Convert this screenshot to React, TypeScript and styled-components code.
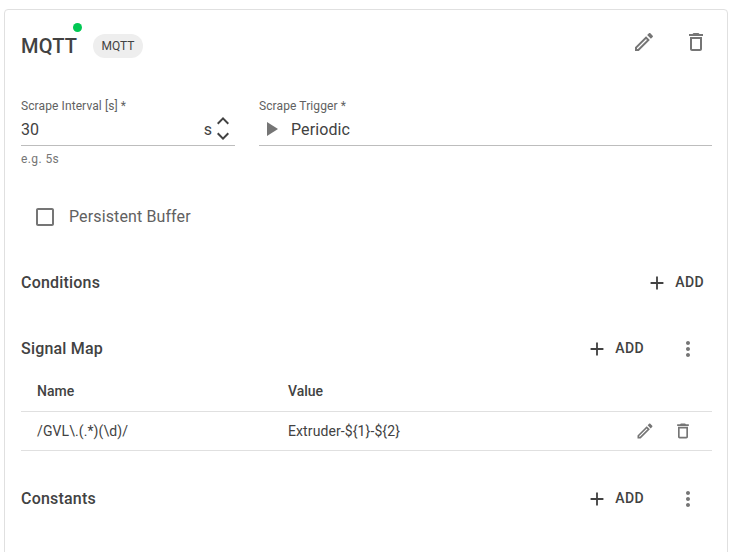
import React from 'react';
import styled, { createGlobalStyle } from 'styled-components';

const Global = createGlobalStyle`
  html, body { margin: 0; padding: 0; background: #fff; overflow: hidden; }
  body { font-family: Roboto, "Liberation Sans", sans-serif; color: #424242; }
`;

const Page = styled.div`
  width: 736px;
  height: 552px;
  overflow: hidden;
  padding: 9px 8px 0 4px;
  box-sizing: border-box;
`;
const Card = styled.section`
  border: 1px solid #e0e0e0;
  border-radius: 4px;
  padding: 0 15px 40px 16px;
  height: 600px;
  box-sizing: border-box;
`;
const Head = styled.header`
  height: 71px;
  display: flex;
  align-items: center;
`;
const TitleWrap = styled.div`
  position: relative;
  margin-right: 16px;
`;
const Title = styled.h1`
  margin: 0;
  font-size: 20px;
  line-height: 24px;
  font-weight: 500;
  color: #424242;
  letter-spacing: 0.15px;
`;
const Dot = styled.span`
  position: absolute;
  right: -5px;
  top: -11px;
  width: 9px;
  height: 9px;
  border-radius: 50%;
  background: #00c853;
`;
const Chip = styled.span`
  height: 24px;
  width: 50px;
  border-radius: 12px;
  background: #eeeeee;
  font-size: 12px;
  line-height: 24px;
  text-align: center;
  color: #424242;
`;
const Spacer = styled.div`
  flex: 1;
`;
const HeadActions = styled.div`
  align-self: flex-start;
  display: flex;
  margin-right: 4px;
  margin-top: 20px;
  gap: 28px;
`;
const Svg = styled.svg<{ $c?: string }>`
  display: block;
  flex: none;
  fill: ${p => p.$c || '#757575'};
`;
const Fields = styled.div`
  display: grid;
  grid-template-columns: 214px 1fr;
  column-gap: 24px;
  padding-top: 18px;
`;
const Field = styled.div`
  display: flex;
  flex-direction: column;
`;
const Label = styled.label`
  font-size: 12px;
  line-height: 14px;
  height: 14px;
  color: #616161;
  letter-spacing: 0.1px;
`;
const Control = styled.div`
  height: 33px;
  display: flex;
  align-items: center;
  border-bottom: 1px solid #bdbdbd;
  font-size: 16px;
  box-sizing: border-box;
  color: #424242;
  letter-spacing: 0.1px;
`;
const Unit = styled.span`
  margin-left: auto;
  margin-right: -1px;
  font-size: 16px;
  padding-top: 1px;
`;
const Stepper = styled.span`
  display: flex;
  flex-direction: column;
  margin-top: -1px;
  svg + svg {
    margin-top: -9px;
  }
`;
const Helper = styled.div`
  font-size: 12px;
  line-height: 14px;
  color: #757575;
  margin-top: 6px;
  letter-spacing: 0.4px;
`;
const TriggerIcon = styled.span`
  display: inline-flex;
  margin-right: 8px;
`;
const CheckRow = styled.div`
  display: flex;
  align-items: center;
  gap: 12px;
  margin-top: 39px;
  margin-left: 12px;
  height: 24px;
`;
const CheckLabel = styled.span`
  font-size: 16px;
  line-height: 24px;
  height: 24px;
  color: #616161;
  letter-spacing: 0.12px;
`;
const SectionHead = styled.div<{ $top: number }>`
  display: flex;
  align-items: center;
  height: 40px;
  margin-top: ${p => p.$top}px;
`;
const SectionTitle = styled.h2`
  margin: 0;
  font-size: 16px;
  font-weight: 500;
  color: #424242;
  flex: 1;
  letter-spacing: 0.2px;
`;
const AddButton = styled.button<{ $end?: boolean }>`
  display: inline-flex;
  align-items: center;
  border: 0;
  background: none;
  padding: 0;
  margin-right: ${p => (p.$end ? 8 : 0)}px;
  font: 500 14px Roboto, sans-serif;
  color: #424242;
  letter-spacing: 0.4px;
  gap: 7px;
  svg {
    margin-top: 2px;
  }
`;
const MoreSlot = styled.span`
  display: inline-flex;
  justify-content: center;
  width: 24px;
  margin-left: 32px;
  margin-right: 12px;
  margin-top: 2px;
`;
const Table = styled.div`
  display: grid;
  grid-template-columns: 251px 1fr 80px;
  margin-top: 3px;
`;
const HeadCell = styled.div`
  height: 41px;
  padding-left: 16px;
  display: flex;
  align-items: center;
  font-size: 14px;
  font-weight: 500;
  color: #424242;
  border-bottom: 1px solid #e0e0e0;
  box-sizing: border-box;
  padding-bottom: 1px;
`;
const Cell = styled.div`
  height: 39px;
  padding-left: 16px;
  display: flex;
  align-items: center;
  font-size: 14px;
  color: #424242;
  border-bottom: 1px solid #e0e0e0;
  box-sizing: border-box;
  letter-spacing: 0.1px;
`;
const ActionCell = styled(Cell)`
  padding-left: 0;
  gap: 18px;
  justify-content: flex-end;
  padding-right: 19px;
`;

const Icon = ({ d, size = 24, c }: { d: string; size?: number; c?: string }) => (
  <Svg $c={c} width={size} height={size} viewBox="0 0 24 24"><path d={d} /></Svg>
);

const EDIT = 'M3 17.25V21h3.75L17.81 9.94l-3.75-3.75L3 17.25zM5.92 19H5v-.92l9.06-9.06.92.92L5.92 19zM20.71 5.63l-2.34-2.34c-.2-.2-.45-.29-.71-.29s-.51.1-.7.29l-1.83 1.83 3.75 3.75 1.83-1.83c.39-.39.39-1.02 0-1.41z';
const TRASH = 'M6 19c0 1.1.9 2 2 2h8c1.1 0 2-.9 2-2V7H6v12zM8 9h8v10H8V9zm7.5-5l-1-1h-5l-1 1H5v2h14V4z';
const PLUS = 'M19 13h-6v6h-2v-6H5v-2h6V5h2v6h6v2z';
const MORE = 'M12 8c1.1 0 2-.9 2-2s-.9-2-2-2-2 .9-2 2 .9 2 2 2zm0 2c-1.1 0-2 .9-2 2s.9 2 2 2 2-.9 2-2-.9-2-2-2zm0 6c-1.1 0-2 .9-2 2s.9 2 2 2 2-.9 2-2-.9-2-2-2z';
const BOX = 'M19 5v14H5V5h14m0-2H5c-1.1 0-2 .9-2 2v14c0 1.1.9 2 2 2h14c1.1 0 2-.9 2-2V5c0-1.1-.9-2-2-2z';
const UP = 'M7.41 15.41L12 10.83l4.59 4.58L18 14l-6-6-6 6z';
const DOWN = 'M7.41 8.59L12 13.17l4.59-4.58L18 10l-6 6-6-6z';
const PLAY = 'M8 5v14l11-7z';

const Add = ({ end }: { end?: boolean }) => (
  <AddButton $end={end}><Icon d={PLUS} size={22} c="#424242" />ADD</AddButton>
);
const More = () => (
  <MoreSlot><Icon d={MORE} /></MoreSlot>
);

export default function App() {
  return (
    <Page>
      <Global />
      <Card>
        <Head>
          <TitleWrap><Title>MQTT</Title><Dot /></TitleWrap>
          <Chip>MQTT</Chip>
          <Spacer />
          <HeadActions>
            <Icon d={EDIT} />
            <Icon d={TRASH} />
          </HeadActions>
        </Head>
        <Fields>
          <Field>
            <Label>Scrape Interval [s] *</Label>
            <Control>
              30
              <Unit>s</Unit>
              <Stepper>
                <Icon d={UP} c="#424242" />
                <Icon d={DOWN} c="#424242" />
              </Stepper>
            </Control>
            <Helper>e.g. 5s</Helper>
          </Field>
          <Field>
            <Label>Scrape Trigger *</Label>
            <Control>
              <TriggerIcon><Icon d={PLAY} c="#757575" /></TriggerIcon>
              Periodic
            </Control>
          </Field>
        </Fields>
        <CheckRow>
          <Icon d={BOX} />
          <CheckLabel>Persistent Buffer</CheckLabel>
        </CheckRow>
        <SectionHead $top={33}>
          <SectionTitle>Conditions</SectionTitle>
          <Add end />
        </SectionHead>
        <SectionHead $top={26}>
          <SectionTitle>Signal Map</SectionTitle>
          <Add />
          <More />
        </SectionHead>
        <Table>
          <HeadCell>Name</HeadCell>
          <HeadCell>Value</HeadCell>
          <HeadCell />
          <Cell>/GVL\.(.*)(\d)/</Cell>
          <Cell>Extruder-{'${1}'}-{'${2}'}</Cell>
          <ActionCell>
            <Icon d={EDIT} size={20} />
            <Icon d={TRASH} size={20} />
          </ActionCell>
        </Table>
        <SectionHead $top={27}>
          <SectionTitle>Constants</SectionTitle>
          <Add />
          <More />
        </SectionHead>
      </Card>
    </Page>
  );
}
